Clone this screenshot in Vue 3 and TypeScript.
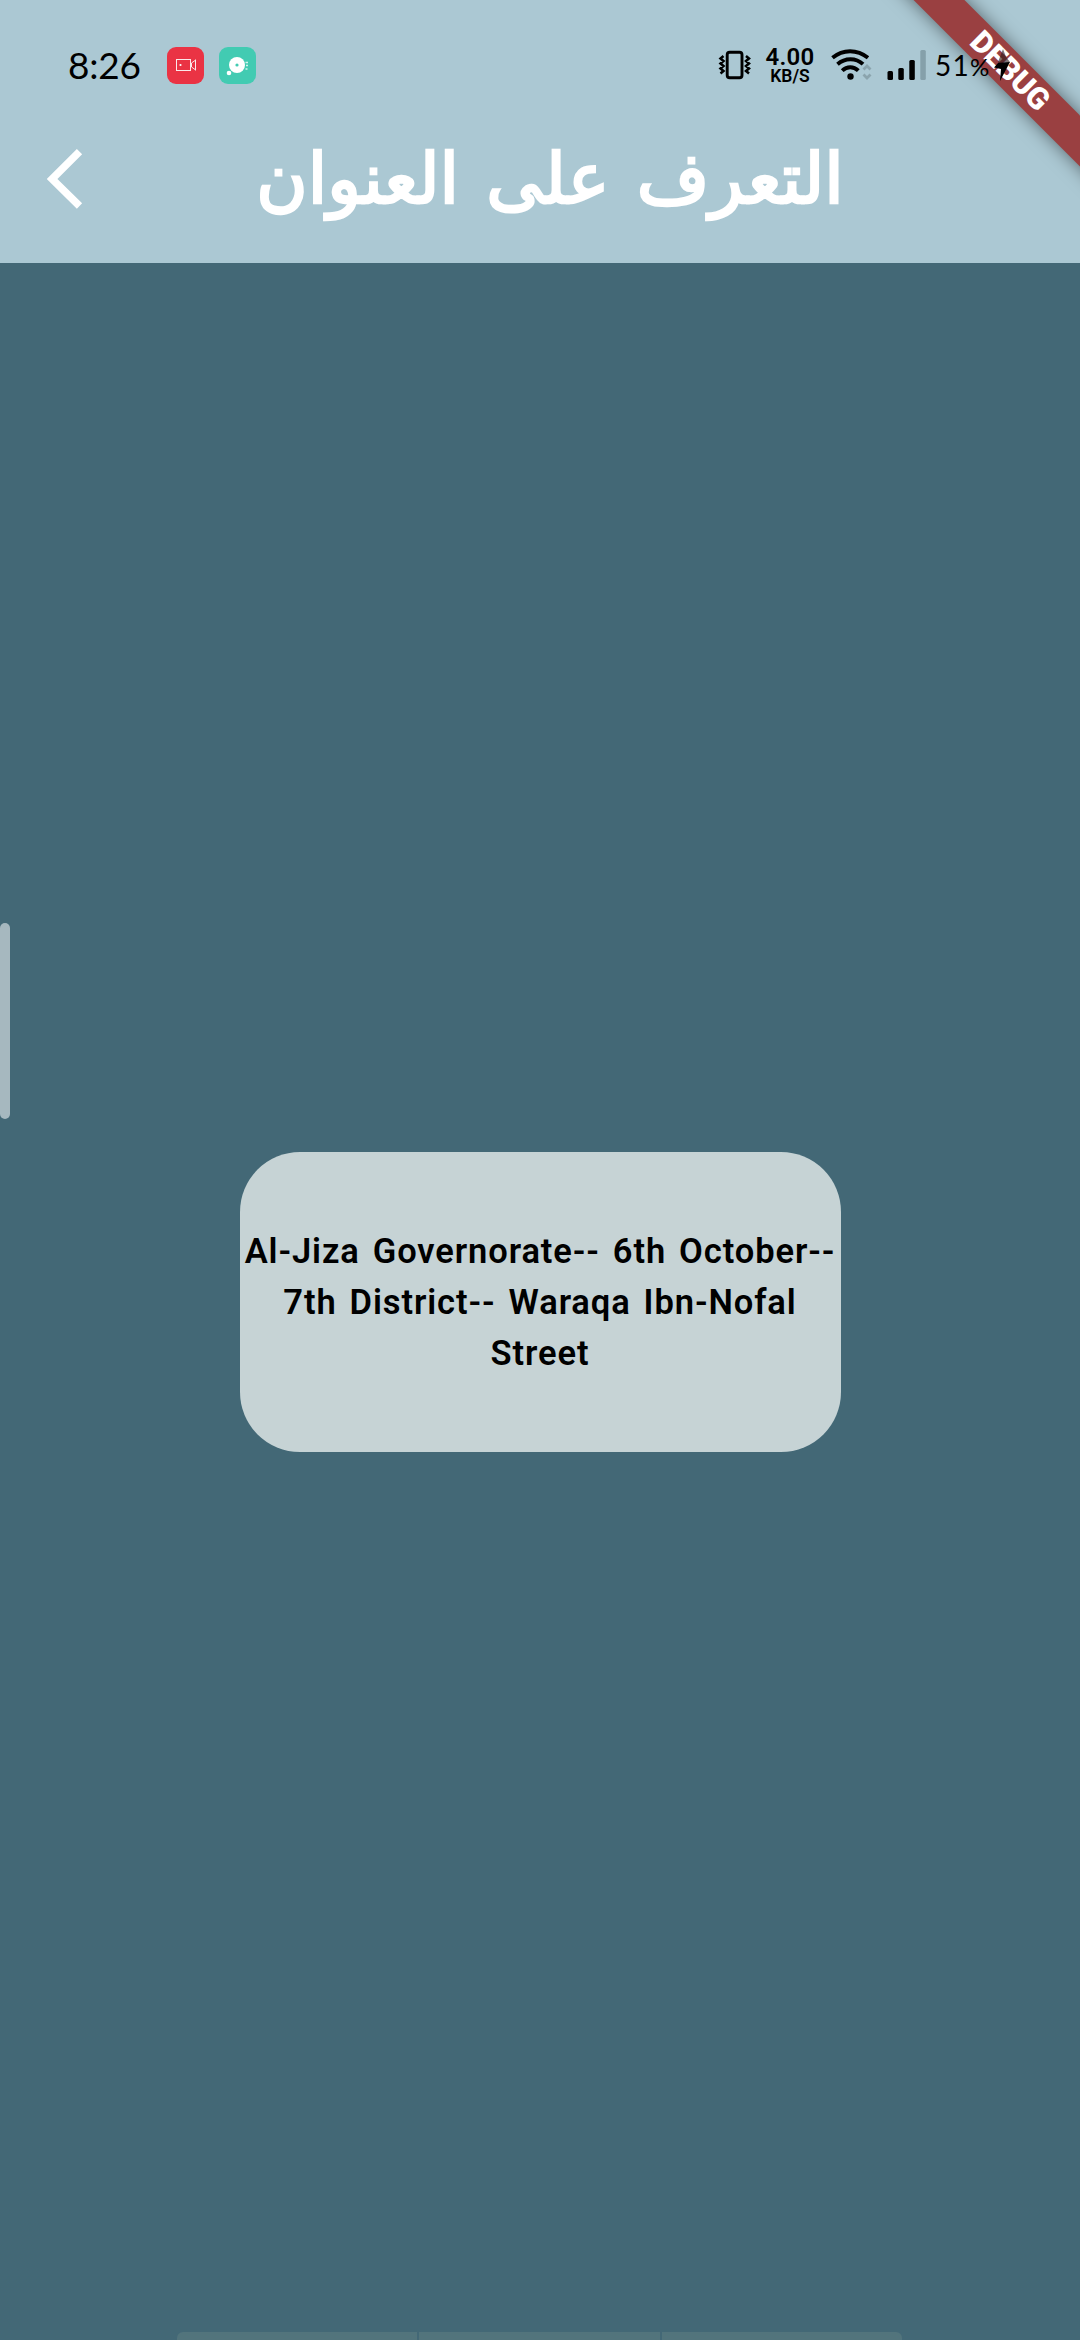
<script setup lang="ts">
const title = 'التعرف على العنوان'
const addressLines: string[] = [
  'Al-Jiza Governorate-- 6th October--',
  '7th District-- Waraqa Ibn-Nofal',
  'Street',
]
</script>

<template>
  <div class="screen">
    <header class="header">
      <div class="status">
        <span class="clock">8:26</span>
        <svg class="badge red" viewBox="0 0 37 37">
          <rect width="37" height="37" rx="9" fill="#ea3344" />
          <g fill="none" stroke="#fbe9ea" stroke-width="1">
            <rect x="9.5" y="12.5" width="14" height="11" />
            <path d="M28.500 12.500v11M28 13.500l-3.500 2.500v4l3.500 2.500" />
          </g>
          <circle cx="13.500" cy="18" r="1.100" fill="#fff" />
        </svg>
        <svg class="badge teal" viewBox="0 0 37 37">
          <rect width="37" height="37" rx="9" fill="#42cbb2" />
          <circle cx="18" cy="18" r="8" fill="#fff" />
          <circle cx="10" cy="26" r="2.300" fill="#fff" />
          <circle cx="18" cy="18" r="1.600" fill="#42cbb2" />
          <path d="M26.500 15.500h2.500M27 18.500h2M26.500 22h2" stroke="#d3f5ee" stroke-width="1.300" />
        </svg>
        <span class="spacer"></span>
        <svg class="vibrate" viewBox="0 0 34 30">
          <rect x="9.200" y="2.200" width="14.800" height="25.600" rx="2.500" fill="none" stroke="#000" stroke-width="2.900" />
          <path d="M5.500 6L2.500 8.500L5.500 11L2.500 13.500L5.500 16L2.500 18.500L5.500 21L2.500 23.500M28 6L31 8.500L28 11L31 13.500L28 16L31 18.500L28 21L31 23.500" fill="none" stroke="#000" stroke-width="2.500" />
        </svg>
        <span class="speed"><b>4.00</b><small>KB/S</small></span>
        <svg class="wifi" viewBox="0 0 42 32">
          <g fill="none" stroke="#000" stroke-width="3.900">
            <path d="M1.500 8.800C12 0 26 0 37 8.800" />
            <path d="M6.500 15.200C14 8.500 25 8.500 32 15.200" />
            <path d="M11.200 21.700C16 17 22.500 17 27.300 21.700" />
          </g>
          <circle cx="19.500" cy="27.500" r="3.200" />
          <path d="M32.500 20.500l3.500-3.500 3.500 3.500M32.500 25.500l3.500 3.500 3.500-3.500" fill="none" stroke="#8ba4ad" stroke-width="2.800" />
        </svg>
        <svg class="signal" viewBox="0 0 39 30">
          <rect x="0.500" y="21" width="5.500" height="9" rx="1.500" />
          <rect x="11.300" y="18" width="5.500" height="12" rx="1.500" />
          <rect x="22.300" y="10" width="5.500" height="20" rx="1.500" />
          <rect x="33.300" y="0" width="5.500" height="30" rx="1.500" fill="#85a0aa" />
        </svg>
        <span class="battery">51<i>%</i></span>
        <svg class="bolt" viewBox="0 0 16 32">
          <path d="M9 0L4 13H16L12 8Z" fill="#2b1a1b" opacity="0.600" />
          <path d="M0 18.500L4.500 13.500L16 13L6 32L7 20Z" />
        </svg>
      </div>
      <div class="bar">
        <svg class="back" viewBox="0 0 36 60">
          <path d="M32.500 2.700L5 30L32.500 57" fill="none" stroke="#fff" stroke-width="7.500" />
        </svg>
        <h1 class="title" dir="rtl">{{ title }}</h1>
      </div>
    </header>
    <main class="body">
      <section class="card">
        <p v-for="line in addressLines" :key="line" class="line">{{ line }}</p>
      </section>
    </main>
    <div class="handle"></div>
    <div class="dock"><span></span><span></span><span></span></div>
    <div class="ribbon-clip"><div class="ribbon">DEBUG</div></div>
  </div>
</template>

<style>
body { margin: 0; }
</style>

<style scoped>
.screen {
  position: relative;
  display: flex;
  flex-direction: column;
  width: 1080px;
  height: 2340px;
  overflow: hidden;
  background: #436876;
  font-family: Roboto, sans-serif;
  color: #000;
}
.header {
  display: flex;
  flex-direction: column;
  box-sizing: border-box;
  height: 263px;
  background: #abc8d3;
}
.status {
  position: relative;
  z-index: 3;
  display: flex;
  align-items: center;
  height: 130px;
  flex: none;
}
.status > * { flex: none; }
.status > .spacer { flex: 1; }
.clock {
  width: 99px;
  margin-left: 68px;
  font: 400 37px/44px Lato, sans-serif;
  letter-spacing: -0.2px;
  white-space: nowrap;
}
.badge { width: 37px; height: 37px; }
.teal { margin-left: 15px; }
.vibrate { width: 34px; height: 30px; }
.speed {
  display: flex;
  flex-direction: column;
  align-items: center;
  width: 50px;
  margin-left: 13px;
}
.speed b { font: 600 24px/22px Roboto, sans-serif; letter-spacing: 0.3px; }
.speed small { font: 600 17.5px/16px Roboto, sans-serif; }
.wifi { width: 42px; height: 32px; margin-left: 16px; }
.signal { width: 39px; height: 30px; margin-left: 14px; }
.battery {
  width: 59px;
  margin-left: 9px;
  padding-top: 1px;
  font: 400 28px/34px Lato, sans-serif;
  letter-spacing: 1.2px;
  white-space: nowrap;
}
.battery i { font-style: normal; font-size: 24px; letter-spacing: 0; }
.bolt { width: 16px; height: 32px; margin-right: 70px; }
.bar {
  display: flex;
  align-items: center;
  height: 98px;
}
.back { width: 36px; height: 60px; margin-left: 47px; flex: none; }
.title {
  width: 600px;
  margin: 0 0 0 167px;
  color: #fff;
  font: 400 70px/98px "DejaVu Sans", sans-serif;
  word-spacing: 5px;
  -webkit-text-stroke: 2.6px #fff;
  text-align: center;
  white-space: nowrap;
}
.body {
  flex: 1;
  display: flex;
  align-items: center;
  justify-content: center;
}
.card {
  display: flex;
  flex-direction: column;
  justify-content: center;
  box-sizing: border-box;
  padding-top: 2px;
  width: 601px;
  height: 300px;
  border-radius: 60px;
  background: #c6d3d5;
}
.line {
  margin: 0;
  font: 600 34.5px/51px Roboto, sans-serif;
  letter-spacing: 0.9px;
  word-spacing: 3.5px;
  text-align: center;
  white-space: nowrap;
}
.handle {
  position: absolute;
  left: 0;
  top: 923px;
  width: 10px;
  height: 196px;
  border-radius: 5px;
  background: #a6b8bf;
}
.dock {
  position: absolute;
  left: 177px;
  bottom: 0;
  display: flex;
  gap: 2px;
  width: 725px;
  height: 8px;
  border-radius: 6px 6px 0 0;
  overflow: hidden;
}
.dock span { flex: 1; background: #52747c; }
.ribbon-clip {
  position: absolute;
  top: 0;
  right: 0;
  z-index: 2;
  width: 260px;
  height: 260px;
  overflow: hidden;
}
.ribbon {
  position: absolute;
  left: 40px;
  top: 53px;
  width: 300px;
  height: 36px;
  transform: rotate(45deg);
  background: #9a4041;
  box-shadow: 0 0 18px rgba(0, 0, 0, 0.5);
  color: #fff;
  font: 900 30.6px/36px Roboto, sans-serif;
  text-align: center;
}
</style>
